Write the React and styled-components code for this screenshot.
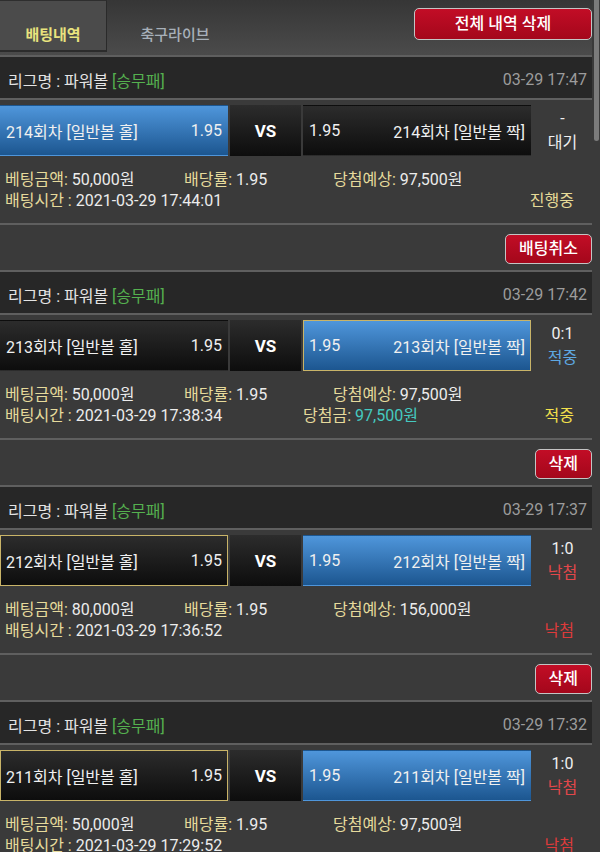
import React from "react";
import styled, { createGlobalStyle } from "styled-components";

const Global = createGlobalStyle`
  html, body {
    margin: 0;
    padding: 0;
    background: #3a3a3a;
    overflow: hidden;
  }
  body {
    font-family: Roboto, "Noto Sans CJK KR", sans-serif;
    font-size: 16px;
    color: #e6e6e6;
  }
`;

const Page = styled.div`
  position: relative;
  width: 600px;
  min-height: 852px;
  background: #3a3a3a;
`;

const Column = styled.div`
  width: 592px;
`;

const Header = styled.div`
  height: 55px;
  display: flex;
  align-items: flex-start;
  background: linear-gradient(#363636, #4b4b4b);
`;

const Tab = styled.div`
  box-sizing: border-box;
  width: ${(p) => (p.$active ? "107px" : "136px")};
  height: 52px;
  display: flex;
  align-items: center;
  justify-content: center;
  padding-top: 15px;
  font-size: 15px;
  font-weight: ${(p) => (p.$active ? 700 : 500)};
  color: ${(p) => (p.$active ? "#e9e37e" : "#a7b0b9")};
  background: ${(p) => (p.$active ? "#4b4b4b" : "transparent")};
  border-right: ${(p) => (p.$active ? "1px solid #2a2a2a" : "none")};
  border-bottom: ${(p) => (p.$active ? "2px solid #2c2c2c" : "none")};
  border-top: ${(p) => (p.$active ? "1px solid #2e2e2e" : "none")};
`;

const Spacer = styled.div`
  flex: 1;
`;

const RedButton = styled.button`
  box-sizing: border-box;
  height: ${(p) => (p.$big ? "32px" : "30px")};
  padding: 0 ${(p) => (p.$big ? "0" : "13px")};
  width: ${(p) => (p.$big ? "178px" : "auto")};
  margin-top: ${(p) => (p.$big ? "8px" : "0")};
  border: 1px solid #c4c4c4;
  border-radius: 5px;
  background: linear-gradient(#c20d26, #a4071b);
  color: #ffffff;
  font-family: Roboto, "Noto Sans CJK KR", sans-serif;
  font-size: 16px;
  font-weight: 500;
  line-height: 1;
  cursor: pointer;
`;

const LeagueRow = styled.div`
  height: 37px;
  display: flex;
  align-items: center;
  justify-content: space-between;
  padding: 4px 5px 0 8px;
  background: #272727;
  border-top: 2px solid #5f5f5f;
  border-bottom: 2px solid #5f5f5f;
`;

const LeagueName = styled.span`
  color: #e4e4e4;
`;

const Tag = styled.span`
  color: #55b04f;
`;

const Time = styled.span`
  color: #9c9c9c;
`;

const MatchRow = styled.div`
  margin-top: 5px;
  height: 51px;
  display: flex;
  gap: 2px;
`;

const Side = styled.div`
  box-sizing: border-box;
  width: 228px;
  display: flex;
  align-items: center;
  justify-content: space-between;
  flex-direction: ${(p) => (p.$away ? "row-reverse" : "row")};
  padding: 0 5px;
  color: #f0f0f0;
  background: ${(p) =>
    p.$picked
      ? "linear-gradient(#4f96db, #1c5690)"
      : "linear-gradient(#2c2c2c, #0d0d0d)"};
  border: 1px solid ${(p) => (p.$winner ? "#c9b468" : "transparent")};
`;

const Versus = styled.div`
  width: 71px;
  display: flex;
  align-items: center;
  justify-content: center;
  font-size: 17px;
  font-weight: 700;
  color: #ffffff;
  background: linear-gradient(#2c2c2c, #0d0d0d);
`;

const Result = styled.div`
  flex: 1;
  display: flex;
  flex-direction: column;
  align-items: center;
  justify-content: center;
  line-height: 24px;
  color: #f0f0f0;
`;

const ResultText = styled.span`
  color: ${(p) => p.$color};
`;

const Info = styled.div`
  padding: 13px 0 12px;
  border-bottom: 2px solid #5f5f5f;
  line-height: 21px;
`;

const InfoLine = styled.div`
  display: grid;
  grid-template-columns: ${(p) => p.$cols};
  padding: 0 18px 0 5px;
  white-space: nowrap;
`;

const Label = styled.span`
  color: #e6da9c;
`;

const Value = styled.span`
  color: ${(p) => p.$color || "#ececec"};
`;

const Status = styled.span`
  color: ${(p) => p.$color};
  text-align: right;
`;

const ActionRow = styled.div`
  height: 45px;
  display: flex;
  align-items: center;
  justify-content: flex-end;
  padding-top: 2px;
  box-sizing: border-box;
`;

const Thumb = styled.div`
  position: absolute;
  top: 0;
  right: 1px;
  width: 5px;
  height: 141px;
  border-radius: 0 0 3px 3px;
  background: rgba(205, 205, 205, 0.45);
`;

const RED = "#e2474a";

const items = [
  {
    round: 214,
    time: "03-29 17:47",
    pick: "home",
    winner: null,
    score: "-",
    resultText: "대기",
    resultColor: "#f0f0f0",
    amount: "50,000원",
    expected: "97,500원",
    betTime: "2021-03-29 17:44:01",
    prize: null,
    status: "진행중",
    statusColor: "#e6da98",
    action: "배팅취소",
  },
  {
    round: 213,
    time: "03-29 17:42",
    pick: "away",
    winner: "away",
    score: "0:1",
    resultText: "적중",
    resultColor: "#5ea8e2",
    amount: "50,000원",
    expected: "97,500원",
    betTime: "2021-03-29 17:38:34",
    prize: "97,500원",
    status: "적중",
    statusColor: "#f2e04c",
    action: "삭제",
  },
  {
    round: 212,
    time: "03-29 17:37",
    pick: "away",
    winner: "home",
    score: "1:0",
    resultText: "낙첨",
    resultColor: RED,
    amount: "80,000원",
    expected: "156,000원",
    betTime: "2021-03-29 17:36:52",
    prize: null,
    status: "낙첨",
    statusColor: "#dd3a3a",
    action: "삭제",
  },
  {
    round: 211,
    time: "03-29 17:32",
    pick: "away",
    winner: "home",
    score: "1:0",
    resultText: "낙첨",
    resultColor: RED,
    amount: "50,000원",
    expected: "97,500원",
    betTime: "2021-03-29 17:29:52",
    prize: null,
    status: "낙첨",
    statusColor: "#dd3a3a",
    action: "삭제",
  },
];

function BetItem({ it }) {
  return (
    <>
      <LeagueRow>
        <LeagueName>
          리그명 : 파워볼 <Tag>[승무패]</Tag>
        </LeagueName>
        <Time>{it.time}</Time>
      </LeagueRow>
      <MatchRow>
        <Side $picked={it.pick === "home"} $winner={it.winner === "home"}>
          <span>{it.round}회차 [일반볼 홀]</span>
          <span>1.95</span>
        </Side>
        <Versus>VS</Versus>
        <Side $away $picked={it.pick === "away"} $winner={it.winner === "away"}>
          <span>{it.round}회차 [일반볼 짝]</span>
          <span>1.95</span>
        </Side>
        <Result>
          <span>{it.score}</span>
          <ResultText $color={it.resultColor}>{it.resultText}</ResultText>
        </Result>
      </MatchRow>
      <Info>
        <InfoLine $cols="179px 149px 1fr">
          <span>
            <Label>베팅금액:</Label> <Value>{it.amount}</Value>
          </span>
          <span>
            <Label>배당률:</Label> <Value>1.95</Value>
          </span>
          <span>
            <Label>당첨예상:</Label> <Value>{it.expected}</Value>
          </span>
        </InfoLine>
        <InfoLine $cols="298px 1fr auto">
          <span>
            <Label>배팅시간 :</Label> <Value>{it.betTime}</Value>
          </span>
          <span>
            {it.prize && (
              <>
                <Label>당첨금:</Label> <Value $color="#45c9c0">{it.prize}</Value>
              </>
            )}
          </span>
          <Status $color={it.statusColor}>{it.status}</Status>
        </InfoLine>
      </Info>
      <ActionRow>
        <RedButton>{it.action}</RedButton>
      </ActionRow>
    </>
  );
}

export default function App() {
  return (
    <Page>
      <Global />
      <Column>
        <Header>
          <Tab $active>배팅내역</Tab>
          <Tab>축구라이브</Tab>
          <Spacer />
          <RedButton $big>전체 내역 삭제</RedButton>
        </Header>
        {items.map((it) => (
          <BetItem key={it.round} it={it} />
        ))}
      </Column>
      <Thumb />
    </Page>
  );
}
